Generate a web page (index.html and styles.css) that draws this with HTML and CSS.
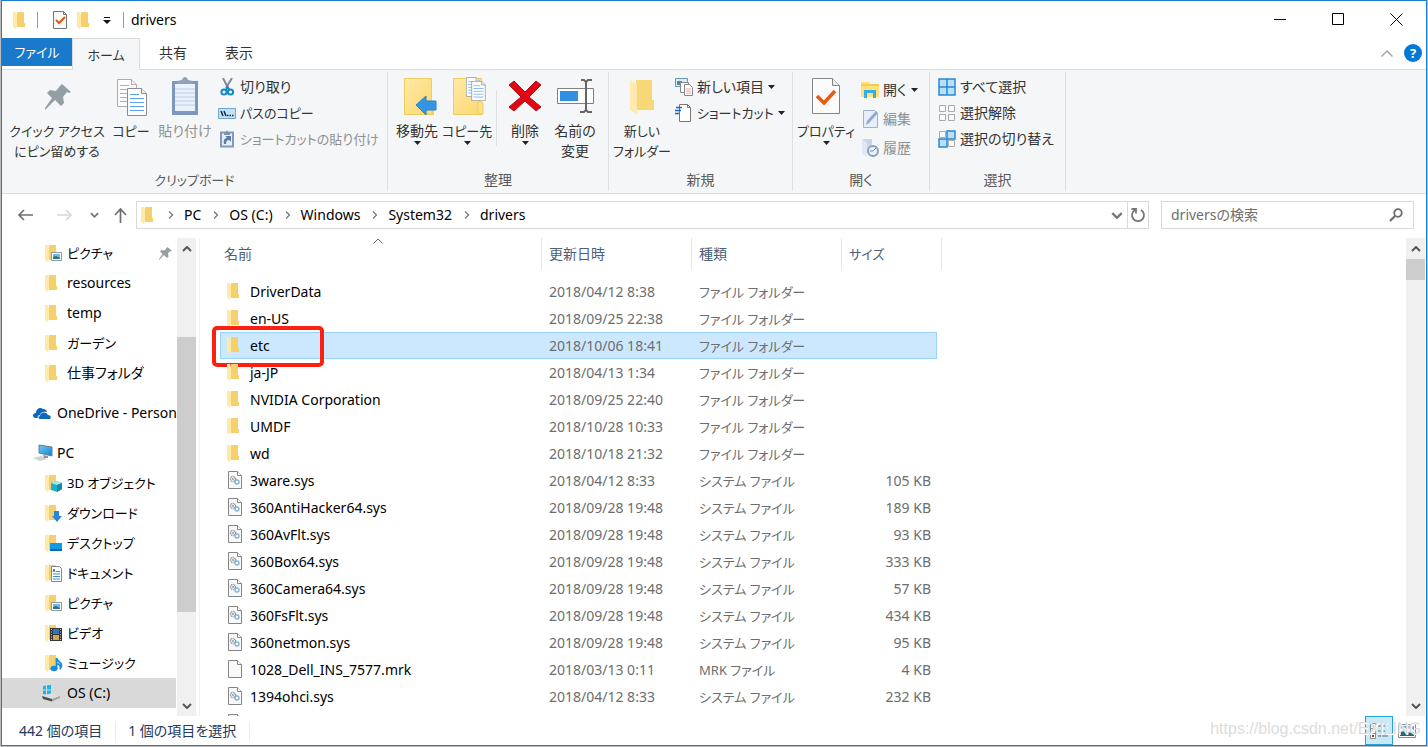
FILE: index.html
```html
<!DOCTYPE html>
<html lang="ja">
<head>
<meta charset="utf-8">
<title>drivers</title>
<link rel="stylesheet" href="styles.css">
</head>
<body>
<svg class="defs" aria-hidden="true">
  <defs>
    <linearGradient id="gold" x1="0" y1="0" x2="1" y2="1"><stop offset="0" stop-color="#ffe9a6"/><stop offset="1" stop-color="#fbd76c"/></linearGradient>
    <linearGradient id="screen" x1="0" y1="0" x2="1" y2="1"><stop offset="0" stop-color="#6ccbf5"/><stop offset="1" stop-color="#1182d4"/></linearGradient>
  </defs>
  <symbol id="folder" viewBox="0 0 18 18"><path d="M5 1h7v11h1v4H5z" fill="#f5d06c"/><path d="M1 1h3l1 3v10l-1 4-3-2z" fill="#ffe9a8"/></symbol>
  <symbol id="pin" viewBox="0 0 26 26"><path d="M17 0l9 8-2 1-2-1-4 5 1 6-3 3-6-6-8 8-2 2v-2l7-10-5-5 3-3 6 1 4-5z" fill="#939fa4"/></symbol>
  <symbol id="sheet" viewBox="0 0 20 28"><path d="M.5.5h14l5 5v22H.5z" fill="#fff" stroke="#8c8c8c"/><path d="M14.500.5v5h5" fill="#eee" stroke="#8c8c8c"/><path d="M3 6.500h9M3 10.500h14M3 14.500h14M3 18.500h14M3 22.500h14" stroke="#5fa0ee"/></symbol>
  <symbol id="page" viewBox="0 0 16 18"><path d="M1.500.5h9l4 4v13h-13z" fill="#f7f9fa" stroke="#858585"/><path d="M10.500.5v4h4" fill="#fff" stroke="#858585"/></symbol>
  <symbol id="sys" viewBox="0 0 16 18"><path d="M1.500.5h9l4 4v13h-13z" fill="#f7f9fa" stroke="#858585"/><path d="M10.500.5v4h4" fill="#fff" stroke="#858585"/><circle cx="6" cy="8" r="2.500" fill="none" stroke="#8a9096" stroke-width="1.500" stroke-dasharray="1 .6"/><circle cx="6" cy="8" r=".9" fill="#8a9096"/><circle cx="10" cy="11" r="2" fill="none" stroke="#8ab4d2" stroke-width="1.400"/></symbol>
  <symbol id="down" viewBox="0 0 7 4"><path d="M0 0h7L3.500 4z" fill="#222"/></symbol>
  <symbol id="chev" viewBox="0 0 10 6"><path d="M1 1l4 4 4-4" fill="none" stroke="currentColor" stroke-width="2"/></symbol>
  <symbol id="gt" viewBox="0 0 6 8"><path d="M1 .5L4.500 4 1 7.500" fill="none" stroke="#777" stroke-width="1.300"/></symbol>
  <symbol id="pics" viewBox="0 0 18 18"><use href="#folder" width="18" height="18" x="-1"/><path d="M6.500 8.500h10v8h-10z" fill="#fff" stroke="#8b98a4"/><path d="M8 10h7v5H8z" fill="#6ebbe8"/><path d="M8 13l3-1 4 2v1H8z" fill="#2c6f78"/></symbol>
</svg>

<div class="window">
  <header class="titlebar">
    <div class="quick">
      <svg class="i18" viewBox="0 0 18 18"><use href="#folder"/></svg>
      <span class="bar"></span>
      <button aria-label="プロパティ"><svg class="i18" viewBox="0 0 18 18"><path d="M2.500.5h10l3 3v14h-13z" fill="#f9f9f9" stroke="#777"/><path d="M12.500.5v3h3" fill="none" stroke="#777"/><path d="M5 9l3 3 6-6" fill="none" stroke="#e8540c" stroke-width="2"/></svg></button>
      <button aria-label="新しいフォルダー"><svg class="i18" viewBox="0 0 18 18"><use href="#folder"/></svg></button>
      <button class="customize" aria-label="カスタマイズ"><svg width="8" height="7" viewBox="0 0 8 7"><path d="M1 .5h6" stroke="#111"/><path d="M0 3h8L4 7z" fill="#111"/></svg></button>
      <span class="bar"></span>
    </div>
    <h1>drivers</h1>
    <div class="winbuttons">
      <button aria-label="最小化"><svg width="13" height="13" viewBox="0 0 13 13"><path d="M0 6.500h12" stroke="#000"/></svg></button>
      <button aria-label="最大化"><svg width="13" height="13" viewBox="0 0 13 13"><path d="M.5.5h11v11H.5z" fill="none" stroke="#000"/></svg></button>
      <button aria-label="閉じる"><svg width="13" height="13" viewBox="0 0 13 13"><path d="M.5.5l12 12M12.500.5l-12 12" stroke="#000"/></svg></button>
    </div>
  </header>

  <nav class="tabs">
    <button class="tab file kana">ファイル</button>
    <button class="tab active kana">ホーム</button>
    <button class="tab">共有</button>
    <button class="tab">表示</button>
    <div class="tabtools">
      <button aria-label="リボンの最小化"><svg width="12" height="7" viewBox="0 0 12 7"><path d="M.5 6.500L6 1l5.500 5.500" fill="none" stroke="#a0a0a0" stroke-width="1.400"/></svg></button>
      <button class="help" aria-label="ヘルプ">?</button>
    </div>
  </nav>

  <section class="ribbon">
    <div class="group clipboard">
      <div class="tools">
        <button class="big w98 kana"><svg class="art" viewBox="0 0 40 40"><use href="#pin" x="8" y="7" width="26" height="26"/></svg><span>クイック アクセス<br>にピン留めする</span></button>
        <button class="big w50 kana"><svg class="art" viewBox="0 0 40 40"><g opacity=".7"><use href="#sheet" x="6" y="2" width="20" height="28"/></g><use href="#sheet" x="16" y="11" width="20" height="28"/></svg><span>コピー</span></button>
        <button class="big w58" disabled><svg class="art" viewBox="0 0 40 40"><path d="M7 4h26v34H7z" fill="#7f97bd"/><path d="M10 7h20v27H10z" fill="#e9f1fb"/><path d="M10 12h20M10 16h20M10 20h20M10 24h20M10 28h20" stroke="#bccde4"/><path d="M12 4l5-1c1-4 5-4 6 0l5 1v3H12z" fill="#8fa2b9"/></svg><span>貼り付け</span></button>
        <div class="stack">
          <button class="small"><svg class="i18" viewBox="0 0 18 18"><path d="M5 0l5 10M14 0L8 10" stroke="#828a90" stroke-width="2" fill="none"/><circle cx="6" cy="14" r="2.600" fill="none" stroke="#1586c6" stroke-width="2"/><circle cx="12.500" cy="14" r="2.600" fill="none" stroke="#1586c6" stroke-width="2"/><path d="M8 12l1.500-3 2 3" stroke="#1586c6" stroke-width="2" fill="none"/></svg>切り取り</button>
          <button class="small kana"><svg class="i18" viewBox="0 0 18 18"><path d="M.5 4.500h17v10H.5z" fill="#c0e2fa" stroke="#72a7cc"/><path d="M3 7l2 5M6 7l2 5" stroke="#112c40" stroke-width="1.500"/><path d="M9 11.500h1.500m1 0H13m1 0h1.500" stroke="#112c40" stroke-width="1.500"/></svg>パスのコピー</button>
          <button class="small kana" disabled><svg class="i18" viewBox="0 0 18 18"><path d="M3 2.500h12v14H3z" fill="#e6eff9" stroke="#8498bb" stroke-width="2"/><path d="M6 3l2-1 1-2 1 2 2 1v2H6z" fill="#7c93b7"/><path d="M6 14c-1-4 1-6 3-6L7.500 6H13v5.500L11 10c-2 0-3 1-3 4z" fill="#5b7ba6"/></svg>ショートカットの貼り付け</button>
        </div>
      </div>
      <div class="caption kana">クリップボード</div>
    </div>
    <div class="group organize">
      <div class="tools">
        <button class="big w50"><svg class="art" viewBox="0 0 40 40"><path d="M7.500 1.500h27v27h2v9h-29z" fill="url(#gold)" stroke="#efcc60"/><path d="M31 37V26l2-2 2 2v11z" fill="#fce08a" stroke="#efcc60"/><path d="M19 28l10-9v5h10v9H29v5z" fill="#3494e6" stroke="#2384d8"/></svg><span>移動先</span><svg class="dd"><use href="#down"/></svg></button>
        <button class="big w50 kana"><svg class="art" viewBox="0 0 40 40"><path d="M6.500 1.500h28v36h-28z" fill="url(#gold)" stroke="#efcc60"/><path d="M31 37V26l2-2 3 2v11z" fill="#fce08a" stroke="#efcc60"/><use href="#sheet" x="19" y="0" width="14" height="20"/><use href="#sheet" x="24" y="4" width="15" height="20"/></svg><span>コピー先</span><svg class="dd"><use href="#down"/></svg></button>
        <span class="divider"></span>
        <button class="big w50"><svg class="art" viewBox="0 0 40 40"><path d="M9 4L20 15 31 4l5 4-12 12 12 10-5 4-11-10L9 34l-5-4 12-10L4 8z" fill="#e30613" stroke="#a8101a"/></svg><span>削除</span><svg class="dd"><use href="#down"/></svg></button>
        <button class="big w50"><svg class="art" viewBox="0 0 40 40"><path d="M2.500 11.500h36v15h-36z" fill="#fff" stroke="#818181"/><path d="M5 14h18v10H5z" fill="#318fe0"/><path d="M26 3h3l2 2 2-2h4M31 5v28M25 35h4l2-2 2 2h4" fill="none" stroke="#666" stroke-width="2"/></svg><span>名前の<br>変更</span></button>
      </div>
      <div class="caption">整理</div>
    </div>
    <div class="group create">
      <div class="tools">
        <button class="big w58 kana"><svg class="art" viewBox="0 0 40 40"><path d="M14 3h16v20h2v10H14z" fill="#f7d778"/><path d="M8 3l7 5v26l1 4-8-5z" fill="#ffe9ae"/></svg><span>新しい<br>フォルダー</span></button>
        <div class="stack">
          <button class="small"><svg class="i18" viewBox="0 0 18 18"><path d="M.5.5h12v8H.5z" fill="#d8edf8" stroke="#6999af"/><path d="M2 3h5v4H2z" fill="#4f879b"/><path d="M5.500 4.500h8v10h-8z" fill="#fff" stroke="#888"/><path d="M9.500 6.500h5l3 3v8h-8z" fill="#fff" stroke="#888"/><path d="M11 11h5m-5 2h5m-5 2h5" stroke="#f0a9a9"/></svg>新しい項目<svg class="dd"><use href="#down"/></svg></button>
          <button class="small kana"><svg class="i18" viewBox="0 0 18 18"><path d="M4.500.5h8l3 3v14h-11z" fill="#fff" stroke="#777"/><path d="M12.500.5v3h3" fill="none" stroke="#777"/><path d="M1 3.500h6M0 6.500h6M0 9.500h4" stroke="#1766b5" stroke-width="1.300"/></svg>ショートカット<svg class="dd"><use href="#down"/></svg></button>
        </div>
      </div>
      <div class="caption">新規</div>
    </div>
    <div class="group open">
      <div class="tools">
        <button class="big w58 kana"><svg class="art" viewBox="0 0 40 40"><path d="M6.500 1.500h20l7 7v28h-27z" fill="#fbfbfb" stroke="#858585"/><path d="M26.500 1.500v7h7" fill="#e9e9e9" stroke="#858585"/><path d="M11 19l7 7 11-12" fill="none" stroke="#eb5a0b" stroke-width="3.500"/></svg><span>プロパティ</span><svg class="dd"><use href="#down"/></svg></button>
        <div class="stack loose">
          <button class="small"><svg class="i18" viewBox="0 0 18 18"><path d="M0 1h8l2 2h8v13H0z" fill="#ffe07b"/><path d="M0 3h18v2H0z" fill="#f6cb55"/><path d="M3 17V9h12v8h-3v-5H6v5z" fill="#35aee5"/></svg>開く<svg class="dd"><use href="#down"/></svg></button>
          <button class="small" disabled><svg class="i18" viewBox="0 0 18 18"><path d="M2.500.5h11l3 3v14h-14z" fill="#e5eef9" stroke="#9fb3d0"/><path d="M5 15l1-4L15 1l2 2L8 13z" fill="#91a9ca"/></svg>編集</button>
          <button class="small" disabled><svg class="i18" viewBox="0 0 18 18"><path d="M1 0h10v14H1z" fill="#c7d6ed"/><path d="M1 0l5 4v14l-5-3z" fill="#dfe9f6"/><circle cx="12" cy="12" r="5" fill="#edf3fb" stroke="#8ba0bf" stroke-width="2"/><path d="M12 12l3-3m-3 3H9" fill="none" stroke="#6c83a8"/></svg>履歴</button>
        </div>
      </div>
      <div class="caption">開く</div>
    </div>
    <div class="group select">
      <div class="tools">
        <div class="stack">
          <button class="small"><svg class="i18" viewBox="0 0 18 18"><path d="M1 1h8v8H1zM9 1h8v8H9zM1 9h8v8H1zM9 9h8v8H9z" fill="#b8e0fb" stroke="#2788d5" stroke-width="1.500"/></svg>すべて選択</button>
          <button class="small"><svg class="i18" viewBox="0 0 18 18"><path d="M1.500 1.500h6v6h-6zM10.500 1.500h6v6h-6zM1.500 10.500h6v6h-6zM10.500 10.500h6v6h-6z" fill="#fafafa" stroke="#aaa"/></svg>選択解除</button>
          <button class="small"><svg class="i18" viewBox="0 0 18 18"><path d="M1.500 1.500h6v6h-6zM10.500 10.500h6v6h-6z" fill="#fafafa" stroke="#aaa"/><path d="M9 1h8v8H9zM1 9h8v8H1z" fill="#b8e0fb" stroke="#2788d5" stroke-width="1.500"/></svg>選択の切り替え</button>
        </div>
      </div>
      <div class="caption">選択</div>
    </div>
  </section>

  <div class="navbar">
    <button class="nb" aria-label="戻る"><svg width="15" height="12" viewBox="0 0 15 12"><path d="M15 6H1m5-5L1 6l5 5" fill="none" stroke="#6f6f6f" stroke-width="1.600"/></svg></button>
    <button class="nb" aria-label="進む"><svg width="15" height="12" viewBox="0 0 15 12"><path d="M0 6h14M9 1l5 5-5 5" fill="none" stroke="#d8d8d8" stroke-width="1.600"/></svg></button>
    <button class="nb recent" aria-label="最近表示した場所"><svg width="9" height="6" color="#777"><use href="#chev"/></svg></button>
    <button class="nb up" aria-label="上へ"><svg width="13" height="15" viewBox="0 0 13 15"><path d="M6.500 15V1M1 7l5.500-6L12 7" fill="none" stroke="#6f6f6f" stroke-width="1.700"/></svg></button>
    <div class="address">
      <svg class="i18" viewBox="0 0 18 18"><use href="#folder"/></svg>
      <svg class="gt"><use href="#gt"/></svg><a href="#">PC</a>
      <svg class="gt"><use href="#gt"/></svg><a href="#">OS (C:)</a>
      <svg class="gt"><use href="#gt"/></svg><a href="#">Windows</a>
      <svg class="gt"><use href="#gt"/></svg><a href="#">System32</a>
      <svg class="gt"><use href="#gt"/></svg><a href="#">drivers</a>
      <button class="history" aria-label="以前の場所"><svg width="12" height="7" color="#777"><use href="#chev"/></svg></button>
      <button class="reload" aria-label="更新"><svg width="16" height="16" viewBox="0 0 16 16"><path d="M5 3a6 6 0 1 0 6 0M1.500 2H6v4.500" fill="none" stroke="#757575" stroke-width="1.800"/></svg></button>
    </div>
    <div class="search">
      <input type="search" aria-label="driversの検索" placeholder="driversの検索">
      <svg width="14" height="14" viewBox="0 0 14 14"><circle cx="9" cy="5" r="3.800" fill="none" stroke="#6b6b6b" stroke-width="1.800"/><path d="M6 8l-5 5" stroke="#6b6b6b" stroke-width="2.200"/></svg>
    </div>
  </div>

  <main class="content">
    <nav class="tree">
      <a href="#" class="kana"><svg class="i18" viewBox="0 0 18 18"><use href="#pics"/></svg>ピクチャ<svg class="pinned" viewBox="0 0 26 26"><use href="#pin"/></svg></a>
      <a href="#"><svg class="i18" viewBox="0 0 18 18"><use href="#folder" x="-1"/></svg>resources</a>
      <a href="#"><svg class="i18" viewBox="0 0 18 18"><use href="#folder" x="-1"/></svg>temp</a>
      <a href="#" class="kana"><svg class="i18" viewBox="0 0 18 18"><use href="#folder" x="-1"/></svg>ガーデン</a>
      <a href="#"><svg class="i18" viewBox="0 0 18 18"><use href="#folder" x="-1"/></svg>仕事フォルダ</a>
      <a href="#" class="root"><svg class="i18" viewBox="0 0 18 18"><path d="M5 14H3C-1 14-1 9 3 9c0-5 5-6 7-4 3 0 4 2 4 3-4-1-7 1-7 3-2 0-3 2-2 3z" fill="#0c68be"/><path d="M7 15c-2 0-2-3 0-3 0-4 6-5 8-1 3 0 4 4 1 4z" fill="#0c68be"/></svg>OneDrive - Person</a>
      <a href="#" class="root"><svg class="i20" viewBox="0 0 20 18"><path d="M6 1l13 2v9L6 9z" fill="url(#screen)" stroke="#687f8d"/><path d="M0 14l8-2 6 3-7 2z" fill="#cbd1d5"/><path d="M10 11l5 1v2h-4z" fill="#8d969c"/></svg>PC</a>
      <a href="#" class="kana"><svg class="i18" viewBox="0 0 18 18"><use href="#folder" x="-1"/><path d="M6 9l5-2 6 2v6l-5 3-6-2z" fill="#20afc9"/><path d="M6 9l5-2 6 2-5 2z" fill="#a7e7ef"/><path d="M12 11l5-2v6l-5 3z" fill="#118aa7"/></svg>3D オブジェクト</a>
      <a href="#" class="kana"><svg class="i18" viewBox="0 0 18 18"><use href="#folder" x="-1"/><path d="M9 7h5v5h3l-5 6-5-6h2z" fill="#2887d8"/></svg>ダウンロード</a>
      <a href="#" class="kana"><svg class="i18" viewBox="0 0 18 18"><use href="#folder" x="-1"/><path d="M5 9h12v8H5z" fill="#109bea"/><path d="M5 15h12v2H5z" fill="#0869aa"/></svg>デスクトップ</a>
      <a href="#" class="kana"><svg class="i18" viewBox="0 0 18 18"><use href="#folder" x="-1"/><path d="M6.500 2.500h8l2 2v13h-10z" fill="#fff" stroke="#7c8c96"/><path d="M8 10h7M8 12.500h7M8 15h7M11 7.500h4" stroke="#3d93c0"/><path d="M8 8l1-3 1 3" fill="none" stroke="#2a76b4"/></svg>ドキュメント</a>
      <a href="#" class="kana"><svg class="i18" viewBox="0 0 18 18"><use href="#pics"/></svg>ピクチャ</a>
      <a href="#" class="kana"><svg class="i18" viewBox="0 0 18 18"><use href="#folder" x="-1"/><path d="M5 4h12v13H5z" fill="#353535"/><path d="M8 5h6v5H8z" fill="#3377bc"/><path d="M8 11h6v5H8z" fill="#cfa65a"/><path d="M6.500 5v12M15.500 5v12" stroke="#ccc" stroke-dasharray="1 1.500"/></svg>ビデオ</a>
      <a href="#" class="kana"><svg class="i18" viewBox="0 0 18 18"><use href="#folder" x="-1"/><ellipse cx="9" cy="14.500" rx="3.500" ry="2.700" fill="#118ee4"/><path d="M11.500 15V4c1 4 5 4 5 7 0 2-1 3-1 3 0-3-2-4-3-4" fill="none" stroke="#118ee4" stroke-width="1.800"/></svg>ミュージック</a>
      <a href="#" class="current drive"><svg class="i20" viewBox="0 0 20 18"><path d="M2 2l3-.5v4H2zM6 1.300L10 1v4.500H6zM2 6.500h3v4l-3-.5zM6 6.500h4V11l-4-.5z" fill="#13b8ee"/><path d="M1 12l10-3 8 3-8 3z" fill="#dedede"/><path d="M1 12l10 3v2.500L2 15z" fill="#4a4f4d"/><path d="M11 15l8-3v2l-8 3.500z" fill="#a2a2a2"/></svg>OS (C:)</a>
    </nav>
    <div class="scroll tree-scroll">
      <button aria-label="上へスクロール"><svg class="flip" width="10" height="6"><use href="#chev"/></svg></button>
      <div class="track"><div class="space"></div><div class="thumb"></div><div class="rest"></div></div>
      <button aria-label="下へスクロール"><svg width="10" height="6"><use href="#chev"/></svg></button>
    </div>

    <div class="files">
      <table>
        <colgroup><col class="c-name"><col class="c-date"><col class="c-kind"><col class="c-size"><col class="c-end"></colgroup>
        <thead><tr><th>名前<svg class="sort" viewBox="0 0 10 6"><path d="M.5 5.500L5 1l4.500 4.500" fill="none" stroke="#666"/></svg></th><th>更新日時</th><th>種類</th><th colspan="2" class="kana">サイズ</th></tr></thead>
        <tbody>
          <tr><td><svg class="i18"><use href="#folder"/></svg>DriverData</td><td>2018/04/12 8:38</td><td>ファイル フォルダー</td><td></td></tr>
          <tr><td><svg class="i18"><use href="#folder"/></svg>en-US</td><td>2018/09/25 22:38</td><td>ファイル フォルダー</td><td></td></tr>
          <tr class="selected"><td><svg class="i18"><use href="#folder"/></svg>etc<span class="marker"></span></td><td>2018/10/06 18:41</td><td>ファイル フォルダー</td><td></td></tr>
          <tr><td><svg class="i18"><use href="#folder"/></svg>ja-JP</td><td>2018/04/13 1:34</td><td>ファイル フォルダー</td><td></td></tr>
          <tr><td><svg class="i18"><use href="#folder"/></svg>NVIDIA Corporation</td><td>2018/09/25 22:40</td><td>ファイル フォルダー</td><td></td></tr>
          <tr><td><svg class="i18"><use href="#folder"/></svg>UMDF</td><td>2018/10/28 10:33</td><td>ファイル フォルダー</td><td></td></tr>
          <tr><td><svg class="i18"><use href="#folder"/></svg>wd</td><td>2018/10/18 21:32</td><td>ファイル フォルダー</td><td></td></tr>
          <tr><td><svg class="i18"><use href="#sys"/></svg>3ware.sys</td><td>2018/04/12 8:33</td><td>システム ファイル</td><td>105 KB</td></tr>
          <tr><td><svg class="i18"><use href="#sys"/></svg>360AntiHacker64.sys</td><td>2018/09/28 19:48</td><td>システム ファイル</td><td>189 KB</td></tr>
          <tr><td><svg class="i18"><use href="#sys"/></svg>360AvFlt.sys</td><td>2018/09/28 19:48</td><td>システム ファイル</td><td>93 KB</td></tr>
          <tr><td><svg class="i18"><use href="#sys"/></svg>360Box64.sys</td><td>2018/09/28 19:48</td><td>システム ファイル</td><td>333 KB</td></tr>
          <tr><td><svg class="i18"><use href="#sys"/></svg>360Camera64.sys</td><td>2018/09/28 19:48</td><td>システム ファイル</td><td>57 KB</td></tr>
          <tr><td><svg class="i18"><use href="#sys"/></svg>360FsFlt.sys</td><td>2018/09/28 19:48</td><td>システム ファイル</td><td>434 KB</td></tr>
          <tr><td><svg class="i18"><use href="#sys"/></svg>360netmon.sys</td><td>2018/09/28 19:48</td><td>システム ファイル</td><td>95 KB</td></tr>
          <tr><td><svg class="i18"><use href="#page"/></svg>1028_Dell_INS_7577.mrk</td><td>2018/03/13 0:11</td><td>MRK ファイル</td><td>4 KB</td></tr>
          <tr><td><svg class="i18"><use href="#sys"/></svg>1394ohci.sys</td><td>2018/04/12 8:33</td><td>システム ファイル</td><td>232 KB</td></tr>
          <tr><td><svg class="i18"><use href="#sys"/></svg></td><td></td><td></td><td></td></tr>
        </tbody>
      </table>
    </div>
    <div class="scroll file-scroll">
      <button aria-label="上へスクロール"><svg class="flip" width="10" height="6"><use href="#chev"/></svg></button>
      <div class="track"><div class="thumb"></div></div>
      <button aria-label="下へスクロール"><svg width="10" height="6"><use href="#chev"/></svg></button>
    </div>
  </main>

  <footer class="status">
    <span class="cell">442 個の項目</span>
    <span class="cell">1 個の項目を選択</span>
    <div class="views">
      <button class="on" aria-label="詳細"><svg width="18" height="18" viewBox="0 0 18 18"><path d="M.5 1.500h5v15h-5z" fill="#fff" stroke="#8b8b8b"/><path d="M.5 6.500h5m-5 5h5" stroke="#8b8b8b"/><path d="M2 3h2v2H2z" fill="#356f88"/><path d="M2 8h2v2H2z" fill="#d8a53c"/><path d="M2 13h2v2H2z" fill="#b02b24"/><path d="M8 4h3m1 0h6M8 9h3m1 0h6M8 14h3m1 0h6" stroke="#5e6b72" stroke-width="1.200"/></svg></button>
      <button aria-label="大アイコン"><svg width="18" height="14" viewBox="0 0 18 14"><path d="M.5.5h17v13H.5z" fill="#fff" stroke="#8d8d8d"/><path d="M2 2h14v10H2z" fill="#5aa2e8"/><path d="M2 5l4-2 3 2 4-1 3 2v2L2 9z" fill="#e1f1fa"/><path d="M2 8l5-1 5 2 4-1v4H2z" fill="#2e6470"/></svg></button>
    </div>
    <span class="watermark">https://blog.csdn.net/EXILING</span>
  </footer>
</div>
</body>
</html>
```
FILE: styles.css
```css
* { box-sizing: border-box; }
body {
  margin: 0;
  padding: 0 1px 1px;
  height: 100vh;
  background: #b9bcc0;
  color: #000;
  font-family: "Noto Sans", "Noto Sans CJK JP", sans-serif;
  font-size: 14px;
  line-height: 20px;
  font-feature-settings: "palt";
}
button {
  padding: 0;
  border: 0;
  background: none;
  color: inherit;
  font: inherit;
  font-feature-settings: inherit;
}
a { color: inherit; text-decoration: none; }
svg { display: block; flex: none; }
.defs { position: absolute; width: 0; height: 0; }
.i18 { width: 18px; height: 18px; }
.i20 { width: 20px; height: 18px; }
.kana { font-size: 13px; }

.window {
  display: flex;
  flex-direction: column;
  height: 100%;
  border: 1px solid #1a7fd0;
  background: #fff;
  overflow: hidden;
}

/* Title bar */
.titlebar { display: flex; align-items: center; height: 37px; flex: none; }
.quick { display: flex; align-items: center; gap: 7px; padding-left: 10px; }
.quick .bar { width: 1px; height: 16px; background: #999; }
.quick .bar:nth-child(2) { margin: 0 6px 0 0; }
.customize { padding: 2px 0 0 2px; }
.customize + .bar { margin-left: 5px; }
h1 { margin: 0 0 0 7px; font-size: 14px; font-weight: 400; }
.winbuttons { display: flex; margin-left: auto; padding-right: 1px; }
.winbuttons button { display: grid; place-items: center; width: 58px; height: 36px; }

/* Ribbon tabs */
.tabs { display: flex; height: 32px; flex: none; border-bottom: 1px solid #dadbdc; color: #333; }
.tab { width: 66px; height: 30px; }
.tab.file { width: 70px; height: 28px; background: #1979ca; color: #fff; }
.tab.active { width: 68px; height: 32px; border: 1px solid #dadbdc; border-bottom: 0; background: #f5f6f7; }
.tabtools { display: flex; align-items: center; gap: 11px; height: 30px; margin-left: auto; padding-right: 4px; }
.help { width: 18px; height: 18px; border-radius: 9px; background: #0078d7; color: #fff; font-weight: 700; font-size: 13px; line-height: 18px; }

/* Ribbon */
.ribbon { display: flex; height: 124px; flex: none; padding: 2px 0; border-bottom: 1px solid #dadbdc; background: #f5f6f7; color: #333; }
.group { display: flex; flex-direction: column; border-right: 1px solid #dfe0e2; white-space: nowrap; }
.tools { display: flex; flex: 1; padding: 5px 4px 0; }
.caption { height: 21px; text-align: center; color: #5a5a5a; }
.clipboard { width: 386px; }
.organize { width: 221px; }
.create { width: 184px; }
.open { width: 137px; }
.select { width: 136px; }
.clipboard .tools { padding-left: 6px; }
.big { display: flex; flex-direction: column; align-items: center; flex: none; height: 84px; }
.big .art { width: 40px; height: 40px; margin-bottom: 4px; }
.dd { width: 7px; height: 4px; }
.w98 { width: 98px; }
.w50 { width: 50px; }
.w58 { width: 58px; }
.divider { flex: none; width: 1px; height: 56px; margin: 13px 3px 0 4px; background: #dfe0e2; }
.stack { display: flex; flex-direction: column; gap: 6px; padding-left: 4px; }
.stack.loose { gap: 9px; padding: 3px 0 0 6px; }
.small { display: flex; align-items: center; gap: 4px; height: 20px; }
button:disabled { color: #8f9193; }

/* Navigation */
.navbar { display: flex; align-items: center; flex: none; height: 42px; padding: 0 12px 0 8px; }
.nb { display: grid; place-items: center; width: 39px; height: 28px; margin-left: -4px; }
.nb + .nb { margin-left: 0; }
.nb.recent { width: 21px; }
.nb.up { width: 31px; }
.address { display: flex; align-items: center; flex: 1; height: 28px; border: 1px solid #d9d9d9; padding-left: 3px; }
.address a { margin-right: 12px; }
.gt { width: 6px; height: 8px; margin-right: 10px; }
.address .i18 { margin-right: 10px; }
.history { display: grid; place-items: center; width: 20px; height: 26px; margin-left: auto; }
.reload { display: grid; place-items: center; width: 21px; height: 26px; border-left: 1px solid #d9d9d9; }
.search { display: flex; align-items: center; width: 253px; height: 28px; margin-left: 12px; padding: 0 10px 0 9px; border: 1px solid #d9d9d9; }
.search input { flex: 1; min-width: 0; padding: 0; border: 0; outline: 0; font: inherit; font-feature-settings: inherit; }
.search input::placeholder { color: #6d6d6d; opacity: 1; }

/* Content panes */
.content { display: flex; flex: 1; min-height: 0; padding-top: 2px; }
.tree { width: 175px; padding-right: 1px; overflow: hidden; }
.tree a { display: flex; align-items: center; height: 30px; padding-left: 43px; gap: 4px; white-space: nowrap; }
.tree .root { margin: 10px 0; padding-left: 31px; gap: 6px; }
.tree .root + .root { margin-bottom: 0; gap: 4px; }
.tree .drive { padding-left: 39px; gap: 6px; }
.tree .current { background: #d9d9d9; }
.tree .pinned { width: 13px; height: 13px; margin: 0 4px 0 auto; }
.scroll { display: flex; flex-direction: column; width: 19px; background: #f0f0f0; color: #555; }
.scroll button { display: grid; place-items: center; height: 21px; flex: none; }
.flip { transform: rotate(180deg); }
.track { display: flex; flex-direction: column; flex: 1; }
.thumb { background: #cdcdcd; }
.tree-scroll .space { flex: 78; }
.tree-scroll .thumb { flex: 275; }
.tree-scroll .rest { flex: 83; }
.file-scroll { margin-right: 1px; }
.file-scroll .thumb { height: 21px; }

/* File table */
.files { flex: 1; min-width: 0; margin-left: 3px; padding-left: 20px; border-left: 1px solid #f0f0f0; overflow: hidden; }
table { width: 722px; border-collapse: separate; border-spacing: 0; table-layout: fixed; }
.c-name { width: 322px; }
.c-date, .c-kind { width: 150px; }
.c-size { width: 95px; }
.c-end { width: 5px; }
th { height: 32px; padding: 0 0 0 7px; border-right: 1px solid #e5e5e5; text-align: left; font-weight: 400; color: #4c607a; }
th:first-child { position: relative; padding-left: 4px; }
.sort { position: absolute; top: 0; left: 153px; width: 10px; height: 6px; }
tbody::before { content: ""; display: block; height: 8px; }
td { height: 27px; padding: 0 0 0 7px; color: #6d6d6d; white-space: nowrap; }
td:first-child { position: relative; padding-left: 6px; color: #000; }
td:nth-child(3) { font-size: 13px; }
td .i18 { display: inline-block; margin-right: 6px; vertical-align: -3px; }
td:nth-child(4) { padding: 0 6px 0 0; text-align: right; }
.selected td { border: solid #99d1ff; border-width: 1px 0; background: #cce8ff; }
.selected td:first-child { border-left-width: 1px; padding-left: 5px; }
.selected td:last-child { border-right-width: 1px; }
.marker { position: absolute; top: -7px; left: -9px; width: 112px; height: 41px; border: 4px solid #fc2010; border-radius: 5px; }

/* Status bar */
.status { position: relative; display: flex; align-items: center; height: 29px; flex: none; padding-left: 17px; color: #223a60; }
.cell { padding-right: 13px; margin-right: 12px; border-right: 1px solid #ececec; }
.views { display: flex; margin-left: auto; padding-right: 5px; }
.views button { display: grid; place-items: center; width: 28px; height: 29px; }
.views .on { border: 1px solid #26a0da; background: #cbe8f6; }
.watermark { position: absolute; right: 5px; top: 3px; font-family: "Liberation Sans", sans-serif; font-size: 16px; color: #dcdcdc; text-shadow: 1px 1px 0 #fff; }
```
